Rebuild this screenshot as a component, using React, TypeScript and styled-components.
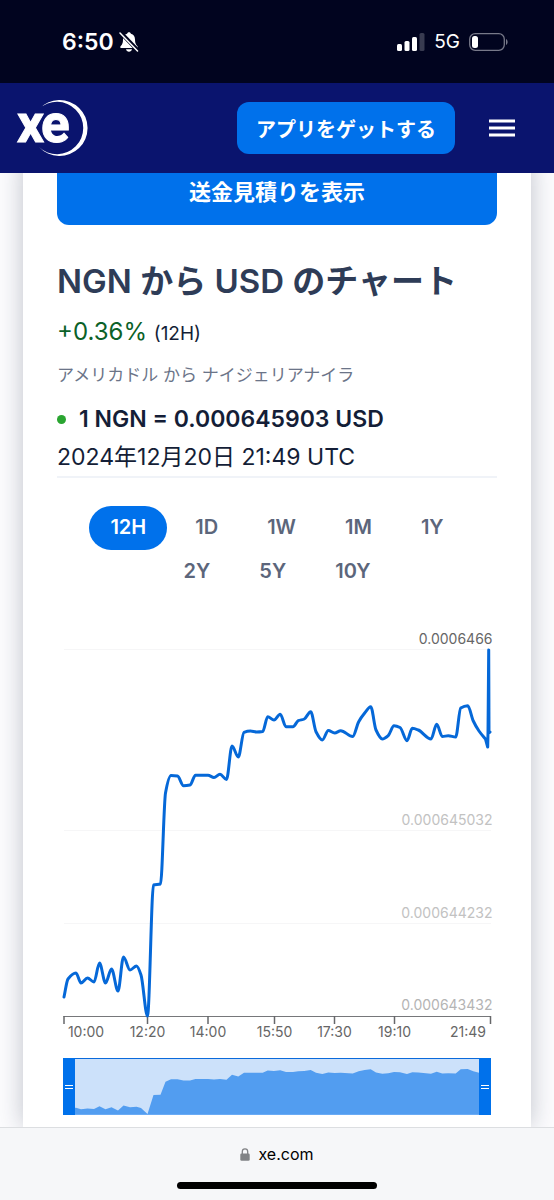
import React, { useState } from "react";
import styled, { createGlobalStyle, css } from "styled-components";

const GlobalStyle = createGlobalStyle`
  *, *::before, *::after { box-sizing: border-box; }
  body {
    margin: 0;
    background: #fcfcfe;
    font-family: Inter, "Noto Sans CJK JP", sans-serif;
    color: #141e37;
  }
  button { font: inherit; cursor: pointer; }
`;

const Page = styled.div`
  display: flex;
  flex-direction: column;
  min-height: 100vh;
`;

const StatusBar = styled.div`
  display: flex;
  align-items: center;
  justify-content: space-between;
  height: 83px;
  padding: 0 46px 0 62px;
  background: #01041f;
  color: #fff;
`;

const StatusGroup = styled.div<{ $gap: number }>`
  display: flex;
  align-items: center;
  gap: ${(p) => p.$gap}px;
`;

const Clock = styled.span`
  font-size: 23px;
  font-weight: 600;
`;

const Network = styled.span`
  font-size: 19px;
  font-weight: 400;
`;

const Header = styled.header`
  position: relative;
  z-index: 1;
  display: flex;
  align-items: center;
  height: 90px;
  padding: 0 36px 0 14px;
  background: #0a146e;
`;

const LogoLink = styled.a`
  display: flex;
  margin-right: auto;
`;

const AppButton = styled.button`
  height: 52px;
  padding: 0 19px;
  border: 0;
  border-radius: 12px;
  background: #0071eb;
  color: #fff;
  font-size: 20px;
  font-weight: 600;
`;

const MenuButton = styled.button`
  display: flex;
  margin-left: 31px;
  padding: 0;
  border: 0;
  background: none;
`;

const Main = styled.main`
  flex: 1;
  display: flex;
  margin-top: -14px;
  padding: 0 23px;
  overflow: hidden;
`;

const Card = styled.section`
  flex: 1;
  min-width: 0;
  padding: 0 34px 12px;
  background: #fff;
  box-shadow: 0 0 24px rgba(20, 30, 55, 0.26);
`;

const QuoteButton = styled.button`
  width: 100%;
  height: 66px;
  padding: 0 0 4px;
  border: 0;
  border-radius: 12px;
  background: #0071eb;
  color: #fff;
  font-size: 22px;
  font-weight: 600;
`;

const Title = styled.h1`
  margin: 36px 0 0;
  font-size: 33px;
  line-height: 40px;
  font-weight: 600;
  color: #2e3c57;
`;

const Change = styled.p`
  margin: 14px 0 0;
  font-size: 24px;
  line-height: 34px;
  color: #0b6128;
`;

const ChangePeriod = styled.span`
  font-size: 19px;
  color: #141e37;
`;

const Pair = styled.p`
  margin: 12px 0 0;
  font-size: 17px;
  line-height: 24px;
  color: #6b7488;
`;

const Rate = styled.p`
  display: flex;
  align-items: center;
  gap: 13px;
  margin: 16px 0 0;
  font-size: 23px;
  line-height: 32px;
  font-weight: 600;
`;

const LiveDot = styled.span`
  width: 9px;
  height: 9px;
  border-radius: 50%;
  background: #2aa531;
`;

const Stamp = styled.p`
  margin: 7px 0 0;
  padding-bottom: 4px;
  border-bottom: 2px solid #f0f3f8;
  font-size: 23px;
  line-height: 30px;
`;

const Periods = styled.div`
  display: flex;
  flex-wrap: wrap;
  justify-content: center;
  column-gap: 7px;
  margin: 28px 0 36px;
  padding: 0 16px;
`;

const PeriodButton = styled.button<{ $active: boolean }>`
  height: 44px;
  padding: 0 21px 2px;
  border: 0;
  border-radius: 22px;
  background: none;
  color: #5c667b;
  font-size: 20px;
  font-weight: 600;
  ${(p) =>
    p.$active &&
    css`
      background: #0071eb;
      color: #fff;
    `}
`;

const Chart = styled.svg`
  display: block;
  width: 100%;
  height: auto;
  font-size: 14px;
`;

const Navigator = styled.div`
  position: relative;
  height: 57px;
  margin: 14px 6px 0;
  border-top: 1px solid #0a6adb;
  background: #cce1fa;
`;

const NavigatorArea = styled.svg`
  display: block;
  width: 100%;
  height: 56px;
`;

const thumb = css`
  appearance: none;
  width: 12px;
  height: 57px;
  border: 0;
  border-radius: 0;
  background:
    linear-gradient(#fff, #fff) center 27px / 8px 1px no-repeat,
    linear-gradient(#fff, #fff) center 30px / 8px 1px no-repeat,
    #0071eb;
  pointer-events: auto;
`;

const Handle = styled.input`
  appearance: none;
  position: absolute;
  left: 0;
  top: -1px;
  width: 100%;
  height: 57px;
  margin: 0;
  background: none;
  pointer-events: none;
  &::-webkit-slider-thumb { ${thumb} }
  &::-moz-range-thumb { ${thumb} }
`;

const BrowserBar = styled.footer`
  position: relative;
  z-index: 1;
  display: flex;
  flex-direction: column;
  align-items: center;
  justify-content: space-between;
  height: 73px;
  padding: 15px 0 11px;
  border-top: 1px solid #dcdee1;
  background: #f6f7f9;
`;

const Address = styled.div`
  display: flex;
  align-items: center;
  gap: 8px;
  font-size: 16px;
  line-height: 22px;
  color: #000;
`;

const HomeIndicator = styled.div`
  width: 36%;
  height: 7px;
  border-radius: 4px;
  background: #000;
`;

type Point = [number, number];

const points: Point[] = [
  [7, 367], [11, 349], [19, 343], [24, 353], [30.5, 348], [37, 352], [42.5, 333],
  [48.5, 353], [54.5, 339], [61, 361], [66.5, 327], [73, 340], [79.5, 336],
  [84, 345], [90.5, 386], [96.5, 255], [103.5, 254], [108.5, 163], [114, 145.5],
  [120.5, 146], [126.5, 155.7], [133, 155], [138.5, 145.3], [151, 145.3],
  [157, 147.5], [163, 144.2], [169.5, 149.5], [175, 116], [181.3, 127],
  [187, 102.3], [193.5, 101], [199.5, 102], [205.7, 101.5], [210.7, 86.7],
  [217, 90], [223.2, 84.2], [229, 96.7], [236, 96.7], [241.3, 90.7], [247.3, 89],
  [253.7, 81.7], [259, 101.7], [265.3, 110], [271.3, 100.5], [277.7, 103],
  [283.7, 100.7], [295.7, 106.5], [301.7, 91.7], [307.7, 83], [313.7, 76.7],
  [319, 100], [325.3, 109], [331.3, 105.5], [337, 95.7], [343, 97.5], [350, 110.7],
  [355.3, 98.3], [361.3, 100], [374, 109], [379.7, 94.3], [385.3, 106.5],
  [391.3, 105.7], [398.7, 107], [403.7, 78], [410.7, 75.7], [416.3, 91],
  [422, 101], [428.5, 109],
];

/* Monotone cubic interpolation, so that the curve never overshoots a reading. */
function curve(pts: Point[]): string {
  const n = pts.length;
  const slope = pts
    .slice(1)
    .map(([x, y], i) => (y - pts[i][1]) / (x - pts[i][0]));
  const tangent = pts.map((_, i) => {
    if (i === 0) return slope[0];
    if (i === n - 1) return slope[n - 2];
    const a = slope[i - 1];
    const b = slope[i];
    return a * b <= 0 ? 0 : (2 * a * b) / (a + b);
  });
  let d = `M${pts[0][0]},${pts[0][1]}`;
  for (let i = 1; i < n; i++) {
    const [x0, y0] = pts[i - 1];
    const [x1, y1] = pts[i];
    const h = (x1 - x0) / 3;
    d += `C${x0 + h},${y0 + tangent[i - 1] * h} ${x1 - h},${y1 - tangent[i] * h} ${x1},${y1}`;
  }
  return d;
}

const linePath = `${curve(points)}L430.700,117L431,103L431.700,20L432,103L433,102`;

const areaPath = `M0,56L${points
  .map(([x, y]) => `${x - 6},${55 - (386 - y) * 0.145}`)
  .join("L")}L428,12V56Z`;

const ticks = [
  { x: 7, label: "10:00", at: 29 },
  { x: 90.5, label: "12:20", at: 90.5 },
  { x: 151, label: "14:00", at: 151 },
  { x: 217.5, label: "15:50", at: 217.5 },
  { x: 277.5, label: "17:30", at: 277.5 },
  { x: 337.5, label: "19:10", at: 337.5 },
  { x: 433.5, label: "21:49", at: 411 },
];

const levels = [
  { y: 19.5, label: "0.0006466", color: "#666" },
  { y: 200.5, label: "0.000645032", color: "#c2c2c2" },
  { y: 293.5, label: "0.000644232", color: "#c2c2c2" },
  { y: 386, label: "0.000643432", color: "#b4b4b4" },
];

const periods = ["12H", "1D", "1W", "1M", "1Y", "2Y", "5Y", "10Y"];

const MutedBell = () => (
  <svg width="20" height="22" viewBox="0 0 20 22" aria-hidden="true">
    <path
      d="M10 1.2c-1 0-1.800.7-1.900 1.600C5.300 3.500 4 5.700 4 8.500c0 3.800-.9 5-2.300 6.500-.8.900-.4 2.100.8 2.100h15c1.200 0 1.600-1.200.8-2.100-1.400-1.500-2.300-2.700-2.300-6.500 0-2.800-1.300-5-4.100-5.700-.1-.9-.9-1.600-1.900-1.600zM7 18.300h6c-.3 1.500-1.500 2.500-3 2.500s-2.700-1-3-2.500z"
      fill="#fff"
    />
    <path d="M1.500 1.500 19 19.500" stroke="#01041f" strokeWidth="4" />
    <path d="M1 2 18.500 20" stroke="#fff" strokeWidth="1.500" strokeLinecap="round" />
  </svg>
);

const Signal = () => (
  <svg width="28" height="18" viewBox="0 0 28 18" aria-hidden="true" fill="#fff">
    <rect x="0" y="11" width="5" height="7" rx="1.500" />
    <rect x="7.500" y="8" width="5" height="10" rx="1.500" />
    <rect x="15" y="4" width="5" height="14" rx="1.500" />
    <rect x="22.500" y="0" width="5" height="18" rx="1.500" fillOpacity=".22" />
  </svg>
);

const Battery = () => (
  <svg width="39" height="18" viewBox="0 0 39 18" aria-hidden="true">
    <rect x=".7" y=".7" width="34.600" height="16.600" rx="5.500" fill="none" stroke="#777989" strokeWidth="1.300" />
    <rect x="3" y="3" width="6" height="12" rx="2.500" fill="#fff" />
    <path d="M37 6c1 .5 1.600 1.600 1.600 3s-.6 2.500-1.600 3z" fill="#777989" />
  </svg>
);

const Logo = () => (
  <svg width="76" height="84" viewBox="14 86 76 84" role="img" aria-label="xe">
    <path d="M39 109A28 28 0 1 1 39 147A26.200 26.200 0 1 0 39 109Z" fill="#fff" />
    <text
      x="17 41"
      y="142"
      fill="#fff"
      stroke="#fff"
      strokeWidth="1"
      fontFamily="Roboto, sans-serif"
      fontWeight="700"
      fontSize="53"
    >
      xe
    </text>
  </svg>
);

const Lock = () => (
  <svg width="10" height="13" viewBox="0 0 10 13" aria-hidden="true">
    <path d="M2.300 6V3.600a2.700 2.700 0 0 1 5.400 0V6" fill="none" stroke="#808285" strokeWidth="1.300" />
    <rect x=".3" y="5.500" width="9.400" height="7.300" rx="1.300" fill="#808285" />
  </svg>
);

export default function App() {
  const [period, setPeriod] = useState("12H");

  return (
    <Page>
      <GlobalStyle />
      <StatusBar>
        <StatusGroup $gap={5}>
          <Clock>6:50</Clock>
          <MutedBell />
        </StatusGroup>
        <StatusGroup $gap={9}>
          <Signal />
          <Network>5G</Network>
          <Battery />
        </StatusGroup>
      </StatusBar>

      <Header>
        <LogoLink href="#">
          <Logo />
        </LogoLink>
        <AppButton type="button">アプリをゲットする</AppButton>
        <MenuButton type="button" aria-label="メニュー">
          <svg width="32" height="24" viewBox="0 0 32 24" stroke="#fff" strokeWidth="3">
            <path d="M3 5h26M3 12h26M3 19h26" />
          </svg>
        </MenuButton>
      </Header>

      <Main>
        <Card>
          <QuoteButton type="button">送金見積りを表示</QuoteButton>
          <Title>NGN から USD のチャート</Title>
          <Change>
            +0.36% <ChangePeriod>(12H)</ChangePeriod>
          </Change>
          <Pair>アメリカドル から ナイジェリアナイラ</Pair>
          <Rate>
            <LiveDot />
            1 NGN = 0.000645903 USD
          </Rate>
          <Stamp>2024年12月20日 21:49 UTC</Stamp>

          <Periods>
            {periods.map((p) => (
              <PeriodButton
                key={p}
                type="button"
                $active={p === period}
                aria-pressed={p === period}
                onClick={() => setPeriod(p)}
              >
                {p}
              </PeriodButton>
            ))}
          </Periods>

          <Chart viewBox="0 0 440 414" role="img" aria-label="NGN から USD のチャート">
            {levels.slice(0, 3).map((l) => (
              <path key={l.y} d={`M7 ${l.y}H434`} stroke="#f6f6f7" />
            ))}
            <path d="M6.500 386.500H434" stroke="#76777a" />
            {ticks.map((t) => (
              <g key={t.label}>
                <path d={`M${t.x} 386V394`} stroke="#66676a" strokeWidth="1.500" />
                <text x={t.at} y="407" textAnchor="middle" fill="#666">
                  {t.label}
                </text>
              </g>
            ))}
            {levels.map((l) => (
              <text key={l.label} x="435.500" y={l.y - 6} textAnchor="end" fill={l.color}>
                {l.label}
              </text>
            ))}
            <path
              d={linePath}
              fill="none"
              stroke="#0568d8"
              strokeWidth="3"
              strokeLinejoin="round"
              strokeLinecap="round"
            />
          </Chart>

          <Navigator>
            <NavigatorArea viewBox="0 0 428 56" preserveAspectRatio="none" aria-hidden="true">
              <path d={areaPath} fill="#529df0" />
              <path d="M0 55.500H428" stroke="#6aabf5" />
            </NavigatorArea>
            <Handle type="range" defaultValue={0} aria-label="開始時刻" />
            <Handle type="range" defaultValue={100} aria-label="終了時刻" />
          </Navigator>
        </Card>
      </Main>

      <BrowserBar>
        <Address>
          <Lock />
          xe.com
        </Address>
        <HomeIndicator />
      </BrowserBar>
    </Page>
  );
}
